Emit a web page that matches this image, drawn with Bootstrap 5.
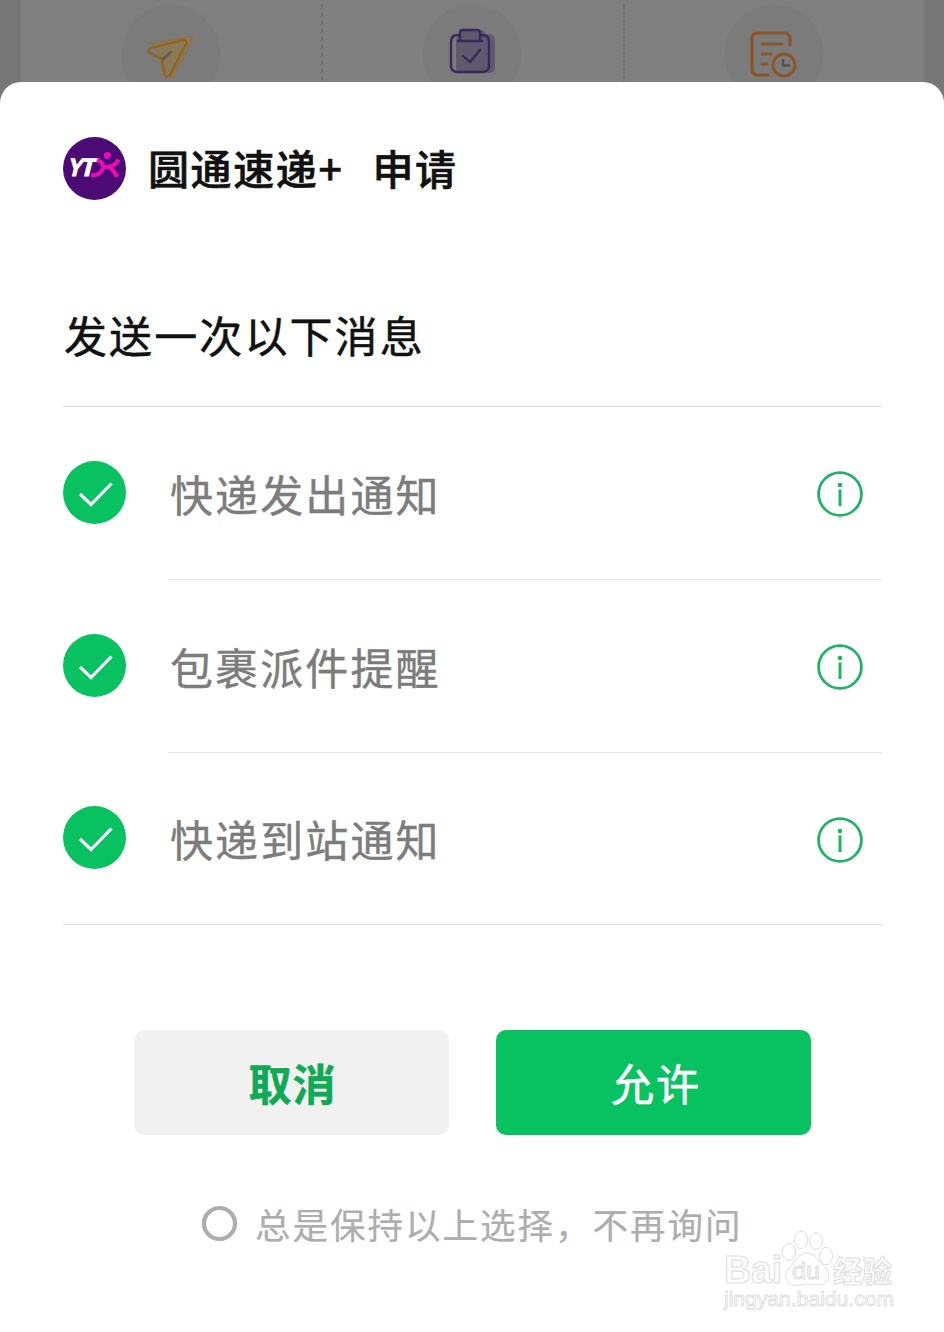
<!DOCTYPE html>
<html lang="zh-CN">
<head>
<meta charset="utf-8">
<meta name="viewport" content="width=device-width, initial-scale=1">
<title>圆通速递+ 申请</title>
<link rel="stylesheet" href="https://cdn.jsdelivr.net/npm/bootstrap@5.3.0/dist/css/bootstrap.min.css">
<style>
  body { width: 944px; height: 1332px; overflow: hidden; background: #777; font-family: "Noto Sans CJK SC", sans-serif; color: #111; }
  .shade { height: 106px; padding: 0 20px 0 21px; }
  .services { background: #808080; height: 106px; grid-template-columns: 300px 302px 301px; }
  .service { padding-top: 4px; position: relative; }
  .service + .service::before { content: ""; position: absolute; left: 0; top: 4px; bottom: 0; width: 2px; background: repeating-linear-gradient(#707070 0 5px, #7c7c7c 5px 8px); }
  .service svg { width: 100px; height: 100px; }
  .sheet { margin-top: -24px; height: 1250px; border-radius: 21px 21px 0 0; padding: 54px 62px 0 63px; position: relative; }
  .app-logo { width: 63px; height: 63px; margin-top: 1px; }
  .app-name { font-size: 41px; line-height: 64px; letter-spacing: 1.6px; font-weight: 500; margin-left: 22px; margin-top: -1px; margin-bottom: 1px; white-space: pre; -webkit-text-stroke: .6px #111; }
  .app-name span { margin-left: 29px; }
  .ask { font-size: 43px; line-height: 64px; letter-spacing: 2.1px; margin: 102px 0 0; padding-left: 1px; height: 104px; font-weight: 400; -webkit-text-stroke: .5px #111; }
  .notices { border-top: 1px solid #dedede; border-bottom: 1px solid #dedede; height: 519px; margin: 0; }
  .notice { height: 173px; }
  .notice:last-child { height: 171px; }
  .tick { width: 63px; height: 63px; margin-top: -2px; }
  .notice-body { margin-left: 42px; height: 100%; padding-right: 18px; }
  .notice:not(:last-child) .notice-body { border-bottom: 1px solid #e3e3e3; }
  .notice-name { font-size: 43px; line-height: 60px; letter-spacing: 2.1px; color: #7c7c7c; padding-left: 2px; margin-top: -1px; -webkit-text-stroke: .4px #7c7c7c; }
  .info { width: 48px; height: 48px; }
  .actions { margin: 105px 0 0 71px; gap: 47px; }
  .act { width: 315px; height: 105px; border: 0; border-radius: 10px; font-size: 43px; line-height: 60px; padding: 0 0 1px; }
  .act-no, .act-no:hover { background: #f1f1f1; color: #10a955; font-weight: 700; letter-spacing: 1px; padding-left: 2px; -webkit-text-stroke: .5px #10a955; }
  .act-yes, .act-yes:hover { background: #08c160; color: #fff; letter-spacing: 2px; padding-left: 5px; -webkit-text-stroke: .6px #fff; }
  .keep { margin: 62px 0 0 138px; font-size: 35.5px; line-height: 54px; letter-spacing: 2px; color: #adadad; -webkit-text-stroke: .2px #adadad; }
  .keep svg { width: 37px; height: 37px; margin-right: 17px; margin-top: -2px; }
  .brand { position: absolute; left: 720px; top: 1144px; width: 180px; height: 90px; }
</style>
<script src="https://cdn.jsdelivr.net/npm/bootstrap@5.3.0/dist/js/bootstrap.bundle.min.js"></script>
</head>
<body>
<header class="shade">
  <div class="services d-grid">
    <div class="service text-center">
      <svg viewBox="0 0 100 100" fill="none" stroke-linecap="round" stroke-linejoin="round">
        <circle cx="50" cy="50" r="49.5" fill="#7b7b7b"/>
        <path d="M31 40 69 32.500Q73 32 71 37L52 73H47L41 54Z" fill="#8b7a57" stroke="#8b7350" stroke-width="1.5"/>
        <path d="M28 47 41 54 43 70 47 73 29 48Z" fill="#7b7b7b"/>
        <path d="M41 55 29 49Q25 46 30 44L62 36Q67 36 65 40L49 71Q45 75 43 70Z" stroke="#936318" stroke-width="2.200"/>
        <path d="m42 55 8-7" stroke="#5c5a58" stroke-width="2.400"/>
      </svg>
    </div>
    <div class="service text-center">
      <svg viewBox="0 0 100 100" fill="none" stroke-linecap="round" stroke-linejoin="round">
        <circle cx="50" cy="50" r="49.5" fill="#7b7b7b"/>
        <path d="M38 28Q38 26 41 26H60Q63 26 63 30H66Q73 31 73 37V63Q73 69 66 69H40Q34 69 34 63V37Q34 31 38 31Z" fill="#61586f"/>
        <path d="M38 31H36Q29 31 29 38V62Q29 68 36 68H60Q67 68 67 62V38Q67 31 60 31H58M36 37H60M38 36V29Q38 26 41 26H55Q58 26 58 29V36" stroke="#37295b" stroke-width="2.400"/>
        <path d="m41 52 7 6 10-12" stroke="#37295b" stroke-width="2.300"/>
      </svg>
    </div>
    <div class="service text-center">
      <svg viewBox="0 0 100 100" fill="none" stroke-linecap="round" stroke-linejoin="round">
        <circle cx="50" cy="50" r="49.5" fill="#7b7b7b"/>
        <path d="M66 41V35Q66 29 60 29H34Q28 29 28 34V65Q28 71 34 71H44M38 40H58M38 50H47M38 60H43" stroke="#8d5425" stroke-width="3.200"/>
        <circle cx="60" cy="61" r="11" stroke="#8d5425" stroke-width="3"/>
        <path d="M59 55V61.500H66" stroke="#57504b" stroke-width="2.500" stroke-linecap="butt"/>
      </svg>
    </div>
  </div>
</header>

<main class="sheet bg-white">
  <div class="d-flex align-items-center">
    <svg class="app-logo" viewBox="0 0 63 63">
      <circle cx="31.5" cy="31.5" r="31.5" fill="#4c0a75"/>
      <g transform="translate(3.500 39) skewX(-14)" font-family="Liberation Sans, sans-serif" font-weight="700" font-size="25" fill="#fff" stroke="#fff" stroke-width="1">
        <text textLength="15" lengthAdjust="spacingAndGlyphs">Y</text>
        <text x="12" textLength="16" lengthAdjust="spacingAndGlyphs">T</text>
      </g>
      <g fill="none" stroke="#ec0bb5" stroke-width="4.200">
        <path d="M34 23Q40.500 25 40 31Q38 38.500 28 38.500"/>
        <path d="M55.500 22.500Q53 28 46 30Q51 33 54 40M39 30H47"/>
      </g>
      <circle cx="44.500" cy="18.500" r="3.600" fill="#ec0bb5"/>
    </svg>
    <div class="app-name">圆通速递+<span>申请</span></div>
  </div>
  <h1 class="ask">发送一次以下消息</h1>

  <ul class="notices list-unstyled">
    <li class="notice d-flex align-items-center">
      <svg class="tick flex-shrink-0" viewBox="0 0 63 63"><circle cx="31.5" cy="31.5" r="31.5" fill="#08c160"/><path d="m17 33 11 10.500 20.500-21" fill="none" stroke="#fff" stroke-width="3.200"/></svg>
      <div class="notice-body d-flex flex-grow-1 align-items-center justify-content-between"><span class="notice-name">快递发出通知</span>
        <svg class="info" viewBox="0 0 48 48"><circle cx="24" cy="25" r="21.4" fill="none" stroke="#1fb366" stroke-width="2.800"/><circle cx="24" cy="16" r="2.300" fill="#1fb366"/><path d="M24 20.500V37" stroke="#1fb366" stroke-width="3"/></svg></div>
    </li>
    <li class="notice d-flex align-items-center">
      <svg class="tick flex-shrink-0" viewBox="0 0 63 63"><circle cx="31.5" cy="31.5" r="31.5" fill="#08c160"/><path d="m17 33 11 10.500 20.500-21" fill="none" stroke="#fff" stroke-width="3.200"/></svg>
      <div class="notice-body d-flex flex-grow-1 align-items-center justify-content-between"><span class="notice-name">包裹派件提醒</span>
        <svg class="info" viewBox="0 0 48 48"><circle cx="24" cy="25" r="21.4" fill="none" stroke="#1fb366" stroke-width="2.800"/><circle cx="24" cy="16" r="2.300" fill="#1fb366"/><path d="M24 20.500V37" stroke="#1fb366" stroke-width="3"/></svg></div>
    </li>
    <li class="notice d-flex align-items-center">
      <svg class="tick flex-shrink-0" viewBox="0 0 63 63"><circle cx="31.5" cy="31.5" r="31.5" fill="#08c160"/><path d="m17 33 11 10.500 20.500-21" fill="none" stroke="#fff" stroke-width="3.200"/></svg>
      <div class="notice-body d-flex flex-grow-1 align-items-center justify-content-between"><span class="notice-name">快递到站通知</span>
        <svg class="info" viewBox="0 0 48 48"><circle cx="24" cy="25" r="21.4" fill="none" stroke="#1fb366" stroke-width="2.800"/><circle cx="24" cy="16" r="2.300" fill="#1fb366"/><path d="M24 20.500V37" stroke="#1fb366" stroke-width="3"/></svg></div>
    </li>
  </ul>

  <div class="actions d-flex">
    <button type="button" class="btn act act-no">取消</button>
    <button type="button" class="btn act act-yes">允许</button>
  </div>

  <div class="keep d-flex align-items-center text-nowrap">
    <svg viewBox="0 0 37 37"><circle cx="18.500" cy="18.500" r="15.500" fill="none" stroke="#adadad" stroke-width="4.200"/></svg>
    <span>总是保持以上选择，不再询问</span>
  </div>

  <svg class="brand" viewBox="0 0 180 90" fill="#fff" stroke="#e0e0e0" stroke-width="1.200">
    <text x="4" y="57" font-family="Liberation Sans, sans-serif" font-weight="700" font-size="38" textLength="58" lengthAdjust="spacingAndGlyphs">Bai</text>
    <g stroke="#dcdcdc" stroke-width="1">
      <ellipse cx="69" cy="26" rx="6.500" ry="8.500"/>
      <ellipse cx="81" cy="14" rx="6.500" ry="8.500"/>
      <ellipse cx="96" cy="15" rx="6.500" ry="8.500"/>
      <ellipse cx="106" cy="30" rx="6.500" ry="8.500"/>
      <path d="M87 27C95 27 97 34 104 40C113 48 108 59 99 59C92 59 90 57 81 59C66 62 62 49 69 42C76 35 79 27 87 27Z"/>
    </g>
    <text x="72" y="53" font-family="Liberation Sans, sans-serif" font-size="24" textLength="28" lengthAdjust="spacingAndGlyphs">du</text>
    <text x="113" y="56" font-family="Noto Sans CJK SC, sans-serif" font-weight="700" font-size="30" textLength="59" lengthAdjust="spacingAndGlyphs">经验</text>
    <text x="4" y="80" font-family="Liberation Sans, sans-serif" font-size="20" stroke-width=".9" textLength="170" lengthAdjust="spacingAndGlyphs">jingyan.baidu.com</text>
  </svg>
</main>
</body>
</html>
